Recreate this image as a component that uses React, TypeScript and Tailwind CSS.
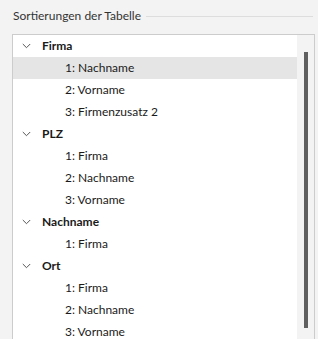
const GROUPS = [
  { title: "Firma", items: ["1: Nachname", "2: Vorname", "3: Firmenzusatz 2"] },
  { title: "PLZ", items: ["1: Firma", "2: Nachname", "3: Vorname"] },
  { title: "Nachname", items: ["1: Firma"] },
  { title: "Ort", items: ["1: Firma", "2: Nachname", "3: Vorname"] },
];

const Chevron = () => (
  <svg width="9" height="6" viewBox="0 0 9 6" className="shrink-0">
    <path d="M0.8 1 L4.5 4.7 L8.2 1" fill="none" stroke="#555" strokeWidth="1" />
  </svg>
);

export default function App() {
  return (
    <div
      className="w-[318px] h-[339px] overflow-hidden bg-[#f3f3f3] text-[12px] text-[#1a1a1a]"
      style={{ fontFamily: '"Segoe UI", Lato, sans-serif' }}
    >
      {/* group box header */}
      <div className="flex items-center h-[34px] pl-[13px] pr-[5px] pb-[2px]">
        <span className="text-[#333]">Sortierungen der Tabelle</span>
        <div className="flex-1 h-px bg-[#dddddd] ml-[5px]" />
      </div>

      <div className="flex ml-[12px] mr-[3px] h-[305px] border border-b-0 border-[#cccccc]">
        <div className="flex-1 bg-white">
          {GROUPS.map((g) => (
            <div key={g.title}>
              <div className="flex items-center h-[22px] pl-[9px]">
                <Chevron />
                <span className="ml-[11px] font-bold">{g.title}</span>
              </div>
              {g.items.map((it, i) => (
                <div
                  key={it}
                  className={`flex items-center h-[22px] pl-[52px] ${
                    g.title === "Firma" && i === 0 ? "bg-[#e5e5e5]" : ""
                  }`}
                >
                  {it}
                </div>
              ))}
            </div>
          ))}
        </div>
        <div className="w-[17px] bg-[#f3f3f3] flex justify-center pt-[17px]">
          <div className="w-[4px] h-[276px] bg-[#5f5f5f]" />
        </div>
      </div>
    </div>
  );
}
